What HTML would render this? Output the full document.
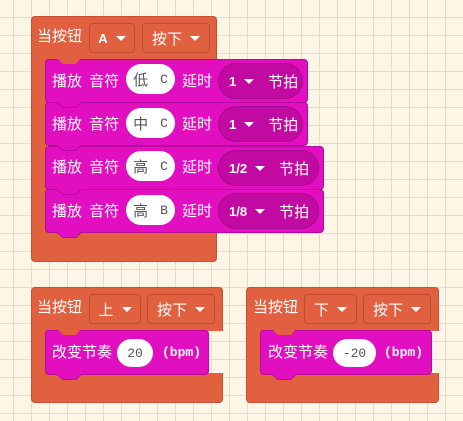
<!DOCTYPE html>
<html><head><meta charset="utf-8"><style>
*{margin:0;padding:0;box-sizing:border-box}
body{width:463px;height:421px;overflow:hidden;position:relative;
background-color:#fdf6e6;
background-image:linear-gradient(90deg,#e4dccb 1px,transparent 1px),linear-gradient(#e4dccb 1px,transparent 1px);
background-size:18px 18px;background-position:13px 0,0 17px;
font-family:"Liberation Sans","Noto Sans CJK SC",sans-serif;font-size:15px;color:#fff}
.a{position:absolute}
.o{background:#e0603f;border:1px solid #c84f31}
.p{background:#e10fbf;border:1px solid #b80a9c}
.dd{position:absolute;border:1px solid #b94e32;border-radius:4px;background:#e0603f;display:flex;align-items:center;justify-content:center;gap:8px;color:#fff}
.ar{width:0;height:0;border-left:5px solid transparent;border-right:5px solid transparent;border-top:5px solid #fff}
.t{position:absolute;white-space:nowrap;line-height:20px}
.w{position:absolute;background:#fff;border-radius:16px;color:#555;display:flex;align-items:center;justify-content:center;gap:12px}
.dk{position:absolute;background:#c20aa2;border:1px solid #a8098c;border-radius:20px;display:flex;align-items:center;padding-left:10px;gap:8px;font-weight:bold;font-size:13px}
.dk .b{font-weight:normal;font-size:15px;margin-left:6px}
.mono{font-family:"Liberation Mono",monospace;font-size:13px}
</style></head><body>

<div class="a o" style="left:31px;top:16px;width:186px;height:44px;border-radius:4px 4px 0 0;border-bottom:none"></div>
<div class="a o" style="left:31px;top:58px;width:16px;height:180px;border-top:none;border-bottom:none"></div>
<div class="a o" style="left:31px;top:232px;width:186px;height:30px;border-radius:0 0 4px 4px;border-top:none"></div>
<div class="t" style="left:37px;top:27px">当按钮</div>
<div class="dd" style="left:89px;top:23px;width:46px;height:30px;font-weight:bold;font-size:13px">A<span class="ar"></span></div>
<div class="dd" style="left:142px;top:23px;width:68px;height:30px">按下<span class="ar"></span></div>

<div class="a p" style="left:45px;top:59px;width:263px;height:44px;border-radius:4px"></div>
<div class="a p" style="left:45px;top:102px;width:263px;height:44px;border-radius:4px"></div>
<div class="a p" style="left:45px;top:146px;width:279px;height:44px;border-radius:4px"></div>
<div class="a p" style="left:45px;top:189px;width:279px;height:44px;border-radius:4px"></div>

<svg class="a" style="left:0;top:0" width="463" height="421">
<polygon points="57,58 81,58 76,64 63,64" fill="#e0603f"/>
<polygon points="57,102 81,102 76,107 63,107" fill="#e10fbf"/>
<polyline points="57,102.5 63,107.5 76,107.5 81,102.5" fill="none" stroke="#b80a9c"/>
<polygon points="57,145 81,145 76,150 63,150" fill="#e10fbf"/>
<polyline points="57,145.5 63,150.5 76,150.5 81,145.5" fill="none" stroke="#b80a9c"/>
<polygon points="57,189 81,189 76,194 63,194" fill="#e10fbf"/>
<polyline points="57,189.5 63,194.5 76,194.5 81,189.5" fill="none" stroke="#b80a9c"/>
<polygon points="57,232 81,232 76,237 63,237" fill="#e10fbf"/>
<polyline points="57,232.5 63,237.5 76,237.5 81,232.5" fill="none" stroke="#b80a9c"/>
</svg>

<div class="t" style="left:52px;top:72px;word-spacing:3px">播放 音符</div>
<div class="w" style="left:126px;top:64px;width:49px;height:30px">低<span class="mono">C</span></div>
<div class="t" style="left:182px;top:72px">延时</div>
<div class="dk" style="left:218px;top:63px;width:85px;height:36px">1<span class="ar"></span><span class="b">节拍</span></div>

<div class="t" style="left:52px;top:115px;word-spacing:3px">播放 音符</div>
<div class="w" style="left:126px;top:108px;width:49px;height:30px">中<span class="mono">C</span></div>
<div class="t" style="left:182px;top:115px">延时</div>
<div class="dk" style="left:218px;top:106px;width:85px;height:36px">1<span class="ar"></span><span class="b">节拍</span></div>

<div class="t" style="left:52px;top:158px;word-spacing:3px">播放 音符</div>
<div class="w" style="left:126px;top:151px;width:49px;height:30px">高<span class="mono">C</span></div>
<div class="t" style="left:182px;top:158px">延时</div>
<div class="dk" style="left:218px;top:150px;width:101px;height:36px">1/2<span class="ar"></span><span class="b">节拍</span></div>

<div class="t" style="left:52px;top:202px;word-spacing:3px">播放 音符</div>
<div class="w" style="left:126px;top:195px;width:49px;height:30px">高<span class="mono">B</span></div>
<div class="t" style="left:182px;top:202px">延时</div>
<div class="dk" style="left:218px;top:193px;width:101px;height:36px">1/8<span class="ar"></span><span class="b">节拍</span></div>

<div class="a o" style="left:31px;top:287px;width:192px;height:44px;border-radius:4px 4px 0 0;border-bottom:none"></div>
<div class="a o" style="left:31px;top:329px;width:16px;height:48px;border-top:none;border-bottom:none"></div>
<div class="a o" style="left:31px;top:373px;width:192px;height:30px;border-radius:0 0 4px 4px;border-top:none"></div>
<div class="t" style="left:37px;top:298px">当按钮</div>
<div class="dd" style="left:89px;top:294px;width:52px;height:30px">上<span class="ar"></span></div>
<div class="dd" style="left:147px;top:294px;width:68px;height:30px">按下<span class="ar"></span></div>
<div class="a p" style="left:45px;top:330px;width:164px;height:45px;border-radius:4px"></div>
<div class="t" style="left:52px;top:343px">改变节奏</div>
<div class="w" style="left:117px;top:339px;width:36px;height:28px"><span class="mono">20</span></div>
<div class="t mono" style="left:162px;top:343px;font-weight:bold">(bpm)</div>

<div class="a o" style="left:246px;top:287px;width:193px;height:44px;border-radius:4px 4px 0 0;border-bottom:none"></div>
<div class="a o" style="left:246px;top:329px;width:16px;height:48px;border-top:none;border-bottom:none"></div>
<div class="a o" style="left:246px;top:373px;width:193px;height:30px;border-radius:0 0 4px 4px;border-top:none"></div>
<div class="t" style="left:253px;top:298px">当按钮</div>
<div class="dd" style="left:304px;top:294px;width:53px;height:30px">下<span class="ar"></span></div>
<div class="dd" style="left:363px;top:294px;width:68px;height:30px">按下<span class="ar"></span></div>
<div class="a p" style="left:260px;top:330px;width:172px;height:45px;border-radius:4px"></div>
<div class="t" style="left:268px;top:343px">改变节奏</div>
<div class="w" style="left:333px;top:339px;width:43px;height:28px"><span class="mono">-20</span></div>
<div class="t mono" style="left:384px;top:343px;font-weight:bold">(bpm)</div>

<svg class="a" style="left:0;top:0" width="463" height="421">
<polygon points="57,329 81,329 76,335 63,335" fill="#e0603f"/>
<polygon points="57,374 81,374 76,379 63,379" fill="#e10fbf"/>
<polyline points="57,374.5 63,379.5 76,379.5 81,374.5" fill="none" stroke="#b80a9c"/>
<polygon points="272,329 296,329 291,335 278,335" fill="#e0603f"/>
<polygon points="272,374 296,374 291,379 278,379" fill="#e10fbf"/>
<polyline points="272,374.5 278,379.5 291,379.5 296,374.5" fill="none" stroke="#b80a9c"/>
</svg>
</body></html>
